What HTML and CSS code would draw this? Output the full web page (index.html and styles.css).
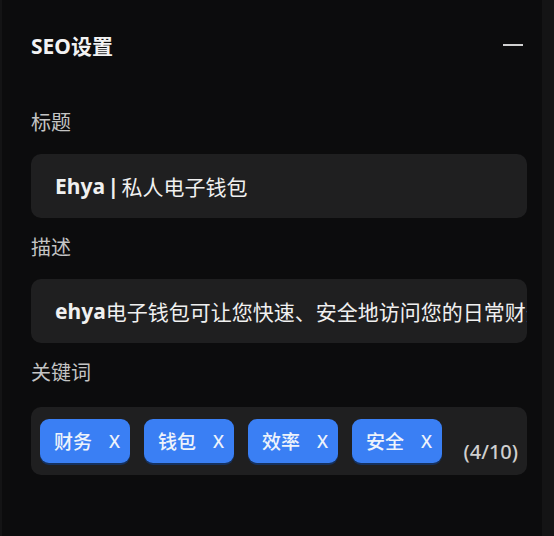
FILE: index.html
```html
<!DOCTYPE html>
<html lang="zh-CN">
<head>
    <meta charset="UTF-8">
    <title>SEO设置</title>
    <link rel="stylesheet" href="styles.css">
</head>
<body>
<div class="panel">
    <div class="panel-head">
        <h2>SEO设置</h2>
        <span class="fold"></span>
    </div>
    <div class="field">
        <label>标题</label>
        <div class="input"><b>Ehya | </b>私人电子钱包</div>
    </div>
    <div class="field">
        <label>描述</label>
        <div class="input"><b>ehya</b>电子钱包可让您快速、安全地访问您的日常财务</div>
    </div>
    <div class="field keywords">
        <label>关键词</label>
        <div class="tags">
            <span class="tag">财务<i>X</i></span>
            <span class="tag">钱包<i>X</i></span>
            <span class="tag">效率<i>X</i></span>
            <span class="tag">安全<i>X</i></span>
            <span class="count">(4/10)</span>
        </div>
    </div>
</div>
</body>
</html>
```

FILE: styles.css
```css
*{
    margin: 0;
    padding: 0;
    box-sizing: border-box;
}
body{
    background: #141415;
    font-family: "Noto Sans", "Noto Sans CJK SC", sans-serif;
    overflow: hidden;
}
.panel{
    width: 540px;
    height: 536px;
    margin-left: 2px;
    background: #0c0c0d;
    padding: 27px 15px 0 29px;
}
.panel-head{
    display: flex;
    align-items: center;
    justify-content: space-between;
    height: 36px;
}
.panel-head h2{
    font-size: 21px;
    font-weight: 700;
    color: #f2f2f2;
}
.fold{
    width: 20px;
    height: 2px;
    background: #d0d0d0;
    margin-right: 4px;
}
.field{
    margin-top: 16px;
}
.panel-head + .field{
    margin-top: 46px;
}
.field label{
    display: block;
    font-size: 20px;
    line-height: 28px;
    color: #c4c4c4;
    margin-bottom: 17px;
}
.keywords label{
    margin-bottom: 20px;
}
.input{
    height: 64px;
    background: #1f1f20;
    border-radius: 10px;
    padding: 0 0 0 24px;
    display: flex;
    align-items: center;
    font-size: 21px;
    color: #f0f0f0;
    white-space: pre;
    overflow: hidden;
}
.input b{
    font-weight: 700;
    word-spacing: -3px;
}
.tags{
    height: 68px;
    background: #1f1f20;
    border-radius: 10px;
    padding: 12px 9px;
    display: flex;
    align-items: center;
    gap: 14px;
}
.tag{
    width: 90px;
    height: 44px;
    border-radius: 9px;
    background: #3a7ff4;
    box-shadow: 0 2px 0 #15315e;
    color: #eef3fb;
    font-size: 19px;
    font-weight: 500;
    display: flex;
    align-items: center;
    padding-left: 14px;
}
.tag i{
    font-style: normal;
    font-size: 18px;
    font-weight: 500;
    margin-left: 17px;
}
.count{
    margin-left: auto;
    align-self: flex-end;
    font-size: 20px;
    font-weight: 500;
    color: #cfcfcf;
    line-height: 26px;
    margin-right: 0;
    margin-bottom: -2px;
}
```
